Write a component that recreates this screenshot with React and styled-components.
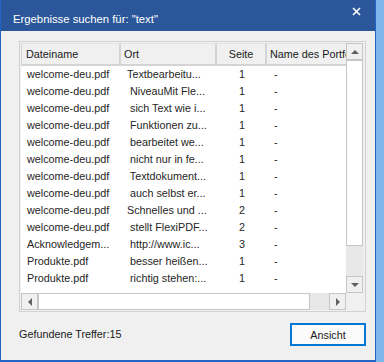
import { Fragment } from 'react';
import styled, { createGlobalStyle } from 'styled-components';

const Global = createGlobalStyle`
    html, body {
        margin: 0;
        padding: 0;
        background: #7db6ea;
        font-family: 'Liberation Sans', Arial, sans-serif;
    }
`;

const Dialog = styled.div`
    width: 376px;
    height: 362px;
    box-sizing: border-box;
    border: 1px solid #2463c2;
    border-top: none;
    border-bottom-width: 2px;
    background: #f0f0f0;
    display: flex;
    flex-direction: column;
`;

const TitleBar = styled.div`
    height: 31px;
    flex: none;
    background: #2b579a;
    display: flex;
    align-items: center;
    justify-content: space-between;
    padding: 0 14px 2px 12px;
    box-sizing: border-box;
`;

const Title = styled.div`
    color: #ffffff;
    font-size: 11.3px;
    margin-top: 9px;
`;

const Close = styled.div`
    width: 9px;
    height: 9px;
    margin-top: -7px;
    display: flex;
`;

const Body = styled.div`
    padding: 10px 9px 0 18px;
    display: flex;
    flex-direction: column;
`;

const Frame = styled.div`
    width: 347px;
    height: 271px;
    box-sizing: border-box;
    border: 1px solid #d2d2d2;
    padding: 1px;
    display: grid;
    grid-template-columns: 325px 17px;
    grid-template-rows: 250px 17px;
`;

const List = styled.div`
    background: #ffffff;
    overflow: hidden;
`;

const Grid = styled.div`
    display: grid;
    grid-template-columns: 100px 96px 50px 110px;
    width: 356px;
`;

const HeadCell = styled.div`
    height: 23px;
    box-sizing: border-box;
    background: #f0f0f0;
    border-top: 1px solid #e2e2e2;
    border-bottom: 2px solid #d4d4d4;
    border-right: 2px solid #d4d4d4;
    border-left: ${p => (p.$first ? '1px solid #d4d4d4' : 'none')};
    font-size: 10.8px;
    color: #1a1a1a;
    line-height: 21px;
    padding-left: ${p => (p.$first ? 4 : 3)}px;
    text-align: ${p => (p.$center ? 'center' : 'left')};
    padding-right: ${p => (p.$center ? 3 : 0)}px;
    white-space: nowrap;
    overflow: hidden;
`;

const Cell = styled.div`
    height: 17px;
    font-size: 10.8px;
    color: #262626;
    line-height: 17px;
    white-space: pre;
    overflow: hidden;
    padding-left: ${p => p.$pad || 0}px;
    text-align: ${p => (p.$center ? 'center' : 'left')};
`;

const VTrack = styled.div`
    background: #e8e8e8;
    display: flex;
    flex-direction: column;
`;

const HTrack = styled.div`
    background: #e8e8e8;
    display: flex;
`;

const ScrollButton = styled.div`
    width: 17px;
    height: 17px;
    box-sizing: border-box;
    border: 1px solid #c6c6c6;
    background: #f0f0f0;
    display: flex;
    align-items: center;
    justify-content: center;
    flex: none;
`;

const Thumb = styled.div`
    box-sizing: border-box;
    border: 1px solid #c6c6c6;
    background: #ffffff;
    flex: none;
    width: ${p => (p.$horizontal ? `${p.$size}px` : '17px')};
    height: ${p => (p.$horizontal ? '17px' : `${p.$size}px`)};
`;

const Spacer = styled.div`
    flex: 1;
`;

const Corner = styled.div`
    background: #f0f0f0;
`;

const Arrow = styled.span`
    width: 0;
    height: 0;
    border-style: solid;
    border-color: transparent;
    ${p => p.$dir === 'up' && 'border-width: 0 4px 4px 4px; border-bottom-color: #606060;'}
    ${p => p.$dir === 'down' && 'border-width: 4px 4px 0 4px; border-top-color: #606060;'}
    ${p => p.$dir === 'left' && 'border-width: 4px 4px 4px 0; border-right-color: #606060;'}
    ${p => p.$dir === 'right' && 'border-width: 4px 0 4px 4px; border-left-color: #606060;'}
`;

const Footer = styled.div`
    margin-top: 11px;
    display: flex;
    align-items: center;
    justify-content: space-between;
`;

const Count = styled.div`
    font-size: 10.8px;
    color: #1a1a1a;
    margin-top: -2px;
`;

const Button = styled.button`
    width: 76px;
    height: 23px;
    box-sizing: border-box;
    border: 2px solid #0078d7;
    background: #fbfbfb;
    font-family: 'Liberation Sans', Arial, sans-serif;
    font-size: 10.8px;
    color: #1a1a1a;
    padding: 0;
`;

const rows = [
    ['welcome-deu.pdf', 'Textbearbeitu...', '1'],
    ['welcome-deu.pdf', ' NiveauMit Fle...', '1'],
    ['welcome-deu.pdf', ' sich Text wie i...', '1'],
    ['welcome-deu.pdf', ' Funktionen zu...', '1'],
    ['welcome-deu.pdf', ' bearbeitet we...', '1'],
    ['welcome-deu.pdf', ' nicht nur in fe...', '1'],
    ['welcome-deu.pdf', ' Textdokument...', '1'],
    ['welcome-deu.pdf', ' auch selbst er...', '1'],
    ['welcome-deu.pdf', 'Schnelles und ...', '2'],
    ['welcome-deu.pdf', ' stellt FlexiPDF...', '2'],
    ['Acknowledgem...', ' http://www.ic...', '3'],
    ['Produkte.pdf', ' besser heißen...', '1'],
    ['Produkte.pdf', ' richtig stehen:...', '1'],
];

const App = () => {
    return (
        <>
            <Global />
            <Dialog>
                <TitleBar>
                    <Title>Ergebnisse suchen für: "text"</Title>
                    <Close>
                        <svg width="9" height="9" viewBox="0 0 9 9">
                            <path d="M1 1 L8 8 M8 1 L1 8" stroke="#ffffff" strokeWidth="1.6" />
                        </svg>
                    </Close>
                </TitleBar>
                <Body>
                    <Frame>
                        <List>
                            <Grid>
                                <HeadCell $first>Dateiname</HeadCell>
                                <HeadCell>Ort</HeadCell>
                                <HeadCell $center>Seite</HeadCell>
                                <HeadCell>Name des Portfolios</HeadCell>
                                {rows.map((r, i) => (
                                    <Fragment key={i}>
                                        <Cell $pad={6}>{r[0]}</Cell>
                                        <Cell $pad={6}>{r[1]}</Cell>
                                        <Cell $center>{r[2]}</Cell>
                                        <Cell $pad={7}>-</Cell>
                                    </Fragment>
                                ))}
                            </Grid>
                        </List>
                        <VTrack>
                            <ScrollButton><Arrow $dir="up" /></ScrollButton>
                            <Thumb $size={186} />
                            <Spacer />
                            <ScrollButton><Arrow $dir="down" /></ScrollButton>
                        </VTrack>
                        <HTrack>
                            <ScrollButton><Arrow $dir="left" /></ScrollButton>
                            <Thumb $horizontal $size={272} />
                            <Spacer />
                            <ScrollButton><Arrow $dir="right" /></ScrollButton>
                        </HTrack>
                        <Corner />
                    </Frame>
                    <Footer>
                        <Count>Gefundene Treffer:15</Count>
                        <Button>Ansicht</Button>
                    </Footer>
                </Body>
            </Dialog>
        </>
    );
};

export default App;
